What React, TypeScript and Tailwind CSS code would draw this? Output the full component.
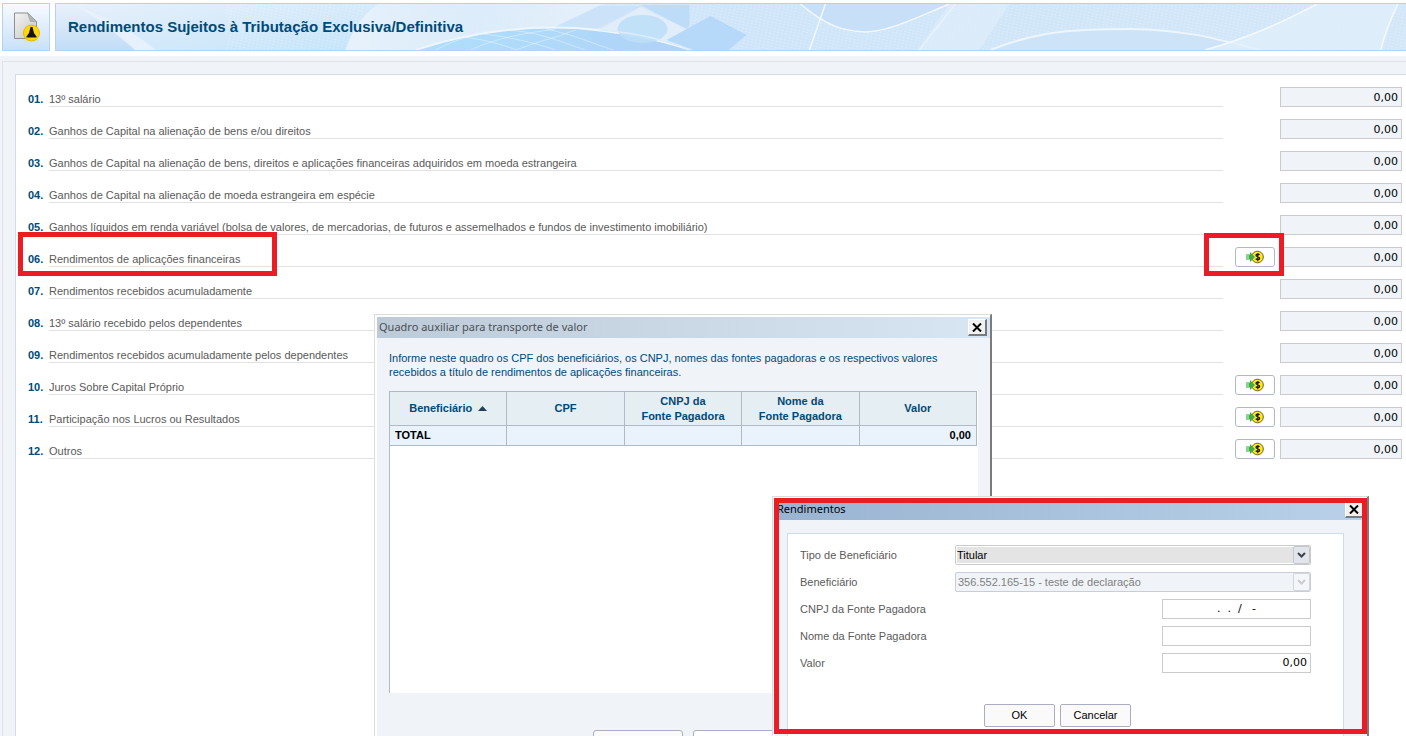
import { useState } from "react";
import type { ReactNode } from "react";

type Row = {
  id: string;
  label: string;
  transfer?: boolean;
  highlight?: boolean;
};

const rows: Row[] = [
  { id: "01", label: "13º salário" },
  { id: "02", label: "Ganhos de Capital na alienação de bens e/ou direitos" },
  {
    id: "03",
    label:
      "Ganhos de Capital na alienação de bens, direitos e aplicações financeiras adquiridos em moeda estrangeira",
  },
  { id: "04", label: "Ganhos de Capital na alienação de moeda estrangeira em espécie" },
  {
    id: "05",
    label:
      "Ganhos líquidos em renda variável (bolsa de valores, de mercadorias, de futuros e assemelhados e fundos de investimento imobiliário)",
  },
  { id: "06", label: "Rendimentos de aplicações financeiras", transfer: true, highlight: true },
  { id: "07", label: "Rendimentos recebidos acumuladamente" },
  { id: "08", label: "13º salário recebido pelos dependentes" },
  { id: "09", label: "Rendimentos recebidos acumuladamente pelos dependentes" },
  { id: "10", label: "Juros Sobre Capital Próprio", transfer: true },
  { id: "11", label: "Participação nos Lucros ou Resultados", transfer: true },
  { id: "12", label: "Outros", transfer: true },
];

function DocumentIcon() {
  return (
    <svg width="28" height="36" viewBox="-1 -2.5 28 36" aria-hidden="true">
      <defs>
        <linearGradient id="paper" x1="0" y1="0" x2="1" y2="1">
          <stop offset="0" stopColor="#f4f4f4" />
          <stop offset="1" stopColor="#c4c5c6" />
        </linearGradient>
        <linearGradient id="shine" x1="0" y1="0" x2="0" y2="1">
          <stop offset="0" stopColor="#d9dda8" />
          <stop offset="1" stopColor="#d5e8f7" stopOpacity="0" />
        </linearGradient>
      </defs>
      <path d="M10 28h16l-2 6H12z" fill="url(#shine)" opacity=".7" />
      <path d="M1.500 1.500h13l9 8.500v17h-22z" fill="url(#paper)" stroke="#8e8f90" />
      <path d="M14.500 1.500l9 8.500h-6z" fill="#b4b5b6" stroke="#9a9b9c" strokeWidth=".6" />
      <circle cx="18.500" cy="21.500" r="8" fill="#ffd60a" stroke="#d8a800" strokeWidth=".7" />
      <path d="M17.500 15.500h2l1.500 6 2.500 3.500v1h-10v-1l2.500-3.500z" fill="#141414" />
    </svg>
  );
}

function BannerArt() {
  return (
    <svg
      className="absolute inset-0 h-full w-full"
      viewBox="0 0 1351 46"
      preserveAspectRatio="none"
      aria-hidden="true"
    >
      <defs>
        <linearGradient id="sky" x1="0" y1="0" x2="1" y2="0">
          <stop offset="0" stopColor="#dfebf8" />
          <stop offset=".2" stopColor="#cfe6f9" />
          <stop offset=".32" stopColor="#d8eafa" />
          <stop offset=".5" stopColor="#cfe5f9" />
          <stop offset="1" stopColor="#d3e7f8" />
        </linearGradient>
        <linearGradient id="left" x1="0" y1="0" x2="0" y2="1">
          <stop offset="0" stopColor="#e9f1fa" />
          <stop offset="1" stopColor="#c2ddf7" />
        </linearGradient>
        <linearGradient id="fold" x1="0" y1="0" x2="1" y2="1">
          <stop offset="0" stopColor="#e6f0fa" />
          <stop offset="1" stopColor="#c4e4fa" />
        </linearGradient>
        <linearGradient id="sweep" x1="0" y1="0" x2="1" y2="0">
          <stop offset="0" stopColor="#eaf3fb" stopOpacity=".9" />
          <stop offset=".5" stopColor="#deedfa" stopOpacity=".6" />
          <stop offset="1" stopColor="#e8f1fa" stopOpacity=".9" />
        </linearGradient>
        <linearGradient id="dome" x1="0" y1="0" x2="1" y2="0">
          <stop offset="0" stopColor="#aedffb" />
          <stop offset="1" stopColor="#b0d2f7" />
        </linearGradient>
        <pattern id="mesh" width="4" height="3" patternUnits="userSpaceOnUse" patternTransform="rotate(12)">
          <path d="M0 .5h2" stroke="#fff" strokeWidth=".7" opacity=".35" />
        </pattern>
      </defs>
      <rect width="1351" height="46" fill="url(#sky)" />
      <path d="M0 0h42c12 14 22 30 37 46H0z" fill="url(#left)" />
      <path d="M30 0h290c-8 18-20 34-32 46H79C68 28 44 12 30 0z" fill="url(#fold)" />
      <path d="M15 0c35 12 60 26 85 46H79C58 28 40 12 15 0z" fill="#eaf3fb" opacity=".8" />
      <rect x="170" width="1181" height="46" fill="url(#mesh)" />
      <path d="M322 0h226l-50 23c-60 1-95 9-140 23h-68c6-20 16-34 32-46z" fill="url(#sweep)" />

      {/* overlapping tiles */}
      <path d="M500 23L543 2h44l-44 22z" fill="#cbe2f8" />
      <path d="M585 1h49v20l-3 4z" fill="#bddcf7" />
      <path d="M545 25l40-22 46 22-32 21h-55z" fill="#e2edfa" />

      {/* woven dome */}
      <path d="M360 46c60-20 115-24 160-22 50 4 85 12 115 22z" fill="url(#dome)" />
      <path
        d="M380 46c20-12 50-18 80-21M415 46c25-12 50-16 85-21M460 46c20-8 40-12 60-20M395 32c30 2 50 8 66 14M420 29c35 4 60 10 80 17M455 26c35 4 50 12 75 20M490 25c30 6 45 14 68 21"
        fill="none"
        stroke="#e0f1fd"
        opacity=".6"
      />
      <path d="M360 46c60-20 115-24 160-22 50 4 85 12 115 22" fill="none" stroke="#eef6fd" strokeWidth="2" />
      <ellipse cx="587" cy="25" rx="25" ry="14" fill="#bddff7" opacity=".9" />
      <path d="M545 26c40 3 66 11 90 20" fill="none" stroke="#dcecfa" strokeWidth="1.500" />
      <path d="M611 36l44-24 36 19-18 15h-35z" fill="#b7d9f9" />

      {/* sails on the right half */}
      <path d="M745 0c28 22 45 27 65 28 25-1 50-14 84-28z" fill="#c8e0f7" />
      <path d="M745 0c28 24 45 27 65 28 25-1 50-14 84-28" fill="none" stroke="#f2f8fe" strokeWidth="1.500" />
      <path d="M770 0l-16 46M900 0l-36 46" fill="none" stroke="#f2f8fe" strokeWidth="1.500" />
      <path d="M894 0h60l-30 46h-62z" fill="#e1eefa" opacity=".6" />
      <path d="M935 46c50-20 90-21 140-21 60 1 90 11 130 21z" fill="#cde3f7" />
      <path d="M935 46c50-20 90-21 140-21 60 1 90 11 130 21" fill="none" stroke="#edf5fd" strokeWidth="2" />
      <path d="M1150 46c50-14 85-32 112-46h81l-17 46z" fill="#e1effb" opacity=".75" />
      <path d="M1150 46c50-14 85-32 112-46M1343 0c-8 16-14 30-17 46" fill="none" stroke="#f4f9fe" strokeWidth="1.500" />
    </svg>
  );
}

function CoinIcon() {
  return (
    <svg width="18" height="14" viewBox="0 0 18 14" aria-hidden="true">
      <circle cx="11.500" cy="7" r="5.800" fill="#ffe81f" stroke="#6e6410" strokeWidth="1" />
      <path d="M0 4.500h4V2l5 5-5 5V9.500H0z" fill="#3fae49" />
      <path d="M0 4.500h3v5H0z" fill="#8fcf95" />
      <path
        d="M13.500 5c-.5-1-3.500-1.300-3.500.3 0 1.700 3.700 1.200 3.700 3 0 1.700-3.300 1.500-3.900.3M11.800 3v8.200"
        fill="none"
        stroke="#1d1a05"
        strokeWidth="1.300"
      />
    </svg>
  );
}

function CloseButton() {
  return (
    <button
      type="button"
      aria-label="Fechar"
      className="flex h-[17px] w-[19px] items-center justify-center border-t border-r-2 border-b-2 border-l border-t-white border-r-[#7a7a7a] border-b-[#7a7a7a] border-l-white bg-[#f0f0f0]"
    >
      <svg width="10" height="9" viewBox="0 0 10 9" aria-hidden="true">
        <path d="M1 .5l8 8M9 .5l-8 8" stroke="#000" strokeWidth="2" />
      </svg>
    </button>
  );
}

function PushButton({ children }: { children: ReactNode }) {
  return (
    <button
      type="button"
      className="h-[23px] w-[71px] rounded-[2px] border border-[#abaec0] bg-[#fafafb] text-center text-black"
    >
      {children}
    </button>
  );
}

function IncomeRow({ row }: { row: Row }) {
  return (
    <div className="flex h-5">
      <label htmlFor={`valor-${row.id}`} className="relative flex min-w-0 flex-1">
        <span className="w-[21px] pt-1 leading-4 font-bold text-[#004a78]">{row.id}.</span>
        <span className="flex-1 border-b border-[#e2e2e2] pt-1 leading-4 whitespace-nowrap">{row.label}</span>
        {row.highlight && (
          <span className="absolute -top-[15px] -left-[10px] z-10 h-11 w-[259px] border-5 border-[#ed1c24]" />
        )}
      </label>
      <div className="relative ml-3 w-10">
        {row.transfer && (
          <button
            type="button"
            aria-label={`Transportar valor: ${row.label}`}
            className="flex h-5 w-10 items-center justify-center rounded-[3px] border border-[#b3b6c8] bg-white"
          >
            <CoinIcon />
          </button>
        )}
        {row.highlight && (
          <span className="absolute -top-[14px] -left-[31px] z-10 h-[43px] w-20 border-5 border-[#ed1c24]" />
        )}
      </div>
      <input
        id={`valor-${row.id}`}
        readOnly
        value="0,00"
        className="ml-[5px] h-5 w-[122px] border border-[#cbcbcb] bg-[#f0f4f9] px-[3px] text-right font-['DejaVu_Sans',sans-serif] text-[11px] text-black"
      />
    </div>
  );
}

function AuxiliaryDialog() {
  const head = "border border-[#b1b9c6] p-0 text-center align-middle font-bold leading-[15px]";
  const cell = "border border-[#b1b9c6] px-[5px] py-0 font-bold text-black";

  return (
    <section
      role="dialog"
      aria-labelledby="quadro-titulo"
      className="absolute top-[314px] left-[374px] h-[480px] w-[618px] border-t border-r-2 border-l border-t-[#dcdcdc] border-r-[#7c7c7c] border-l-[#dcdcdc] bg-[#f0f3f8]"
    >
      <div className="flex h-full flex-col border-t-2 border-l-2 border-white">
        <header className="flex h-[21px] items-center justify-between bg-linear-to-r from-[#bdcbd9] to-[#d8e5f2] pr-[3px] pl-[2px]">
          <h2 id="quadro-titulo" className="font-['Noto_Sans',sans-serif] text-[11px] text-[#4a4f55]">
            Quadro auxiliar para transporte de valor
          </h2>
          <CloseButton />
        </header>
        <div className="pt-[13px] pr-3 pl-3 text-[#004a78]">
          <p className="h-10 leading-[14px]">
            Informe neste quadro os CPF dos beneficiários, os CNPJ, nomes das fontes pagadoras e os respectivos valores
            recebidos a título de rendimentos de aplicações financeiras.
          </p>
          <div className="h-[302px] border-l border-[#b1b9c6] bg-white">
            <table className="-ml-px w-[588px] table-fixed border-collapse text-[11px]">
              <thead className="bg-[#e4eef3]">
                <tr className="h-[34px]">
                  <th className={head}>
                    <span className="inline-flex items-center gap-[6px]">
                      Beneficiário
                      <svg width="9" height="5" viewBox="0 0 9 5" aria-hidden="true">
                        <path d="M0 5l4.500-5L9 5z" fill="#1f3e58" />
                      </svg>
                    </span>
                  </th>
                  <th className={head}>CPF</th>
                  <th className={head}>
                    CNPJ da
                    <br />
                    Fonte Pagadora
                  </th>
                  <th className={head}>
                    Nome da
                    <br />
                    Fonte Pagadora
                  </th>
                  <th className={head}>Valor</th>
                </tr>
              </thead>
              <tbody className="bg-[#eaf2fc]">
                <tr className="h-5">
                  <td className={cell}>TOTAL</td>
                  <td className={cell} />
                  <td className={cell} />
                  <td className={cell} />
                  <td className={`${cell} text-right`}>0,00</td>
                </tr>
              </tbody>
            </table>
          </div>
        </div>
        <footer className="flex justify-center gap-[10px] pt-[37px] pl-2">
          <button
            type="button"
            aria-label="Novo"
            className="h-6 w-[90px] rounded-[3px] border border-[#abaec0] bg-[#fafafb]"
          />
          <button type="button" aria-label="Excluir" className="h-6 w-[90px] rounded-[3px] border border-[#abaec0] bg-white" />
        </footer>
      </div>
    </section>
  );
}

function Arrow({ muted }: { muted?: boolean }) {
  return (
    <span
      className={`pointer-events-none absolute inset-y-0 right-0 flex w-[17px] items-center justify-center rounded-[2px] border ${
        muted ? "border-[#d3d7dc] bg-[#f4f6f9]" : "border-[#c5c7cf] bg-[#e3e5ec]"
      }`}
    >
      <svg width="9" height="6" viewBox="0 0 9 6" aria-hidden="true">
        <path d="M1 1l3.500 3.500L8 1" fill="none" stroke={muted ? "#c9ccd0" : "#3d434d"} strokeWidth="2" />
      </svg>
    </span>
  );
}

function IncomeDialog() {
  const [tipo, setTipo] = useState("Titular");
  const [cnpj, setCnpj] = useState(".  .  /   -");
  const [nome, setNome] = useState("");
  const [valor, setValor] = useState("0,00");
  const field = "h-5 w-[149px] border border-[#cbcbcb] bg-white px-[3px] text-black";

  return (
    <section
      role="dialog"
      aria-labelledby="rendimentos-titulo"
      className="absolute top-[496px] left-[772px] h-[260px] w-[597px] border-t border-r-2 border-l border-t-[#dcdcdc] border-r-[#7c7c7c] border-l-[#dcdcdc] bg-[#f0f3f8]"
    >
      <div className="flex h-full flex-col border-t-2 border-l-2 border-white">
        <header className="flex h-[21px] items-center justify-between bg-linear-to-r from-[#99b4d1] to-[#b9d1ea] pr-[3px] pl-[2px]">
          <h2 id="rendimentos-titulo" className="font-['Noto_Sans',sans-serif] text-[11px] text-black">
            Rendimentos
          </h2>
          <CloseButton />
        </header>
        <form
          className="mt-[13px] mr-[23px] ml-3 flex flex-1 flex-col border border-[#d0dde8] bg-white pt-[11px] pr-8 pl-3"
          onSubmit={(e) => e.preventDefault()}
        >
          <div className="flex flex-col gap-[7px] leading-5">
            <div className="flex">
              <label htmlFor="tipo" className="w-[155px]">
                Tipo de Beneficiário
              </label>
              <div className="relative h-5 flex-1 rounded-[2px] border border-[#cbcbcb] bg-white p-[1px]">
                <select
                  id="tipo"
                  value={tipo}
                  onChange={(e) => setTipo(e.target.value)}
                  className="block h-4 w-full appearance-none bg-[#e4e4e4] leading-4 text-black"
                >
                  <option>Titular</option>
                  <option>Dependente</option>
                </select>
                <Arrow />
              </div>
            </div>
            <div className="flex">
              <label htmlFor="beneficiario" className="w-[155px]">
                Beneficiário
              </label>
              <div className="relative h-5 flex-1 rounded-[2px] border border-[#c9ced6] bg-[#f0f4f9] p-[1px]">
                <select
                  id="beneficiario"
                  disabled
                  className="block h-4 w-full appearance-none bg-transparent pl-[1px] leading-4 text-[#808080] opacity-100"
                >
                  <option>356.552.165-15 - teste de declaração</option>
                </select>
                <Arrow muted />
              </div>
            </div>
            <div className="flex justify-between">
              <label htmlFor="cnpj">CNPJ da Fonte Pagadora</label>
              <input
                id="cnpj"
                value={cnpj}
                onChange={(e) => setCnpj(e.target.value)}
                className={`${field} text-center font-['DejaVu_Sans',sans-serif]`}
              />
            </div>
            <div className="flex justify-between">
              <label htmlFor="nome">Nome da Fonte Pagadora</label>
              <input id="nome" value={nome} onChange={(e) => setNome(e.target.value)} className={field} />
            </div>
            <div className="flex justify-between">
              <label htmlFor="valor">Valor</label>
              <input
                id="valor"
                value={valor}
                onChange={(e) => setValor(e.target.value)}
                className={`${field} text-right font-['DejaVu_Sans',sans-serif]`}
              />
            </div>
          </div>
          <div className="mt-[31px] ml-1 flex justify-center gap-[5px]">
            <PushButton>OK</PushButton>
            <PushButton>Cancelar</PushButton>
          </div>
        </form>
      </div>
      <span className="pointer-events-none absolute top-[1px] left-[1px] h-[236px] w-[593px] border-5 border-[#ed1c24]" />
    </section>
  );
}

export default function App() {
  return (
    <div className="relative flex h-screen flex-col overflow-hidden bg-white font-['Liberation_Sans',Arial,sans-serif] text-[11px] text-[#5a5a5a]">
      <header className="flex gap-[5px] pt-[3px] pb-[5px] pl-[2px]">
        <div className="flex h-12 w-12 items-center justify-center border border-[#b3d3f3] bg-linear-to-b from-[#f7fafe] to-[#c8e1f9]">
          <DocumentIcon />
        </div>
        <div className="relative flex h-12 flex-1 items-center overflow-hidden border-y border-l border-[#b3d3f3]">
          <BannerArt />
          <h1 className="relative pl-3 text-[15px] font-bold text-[#004a78]">
            Rendimentos Sujeitos à Tributação Exclusiva/Definitiva
          </h1>
        </div>
      </header>

      <div className="flex flex-1 flex-col bg-[#f0f3f8] pt-[5px] pl-[2px]">
        <div className="flex flex-1 flex-col border-t border-l border-[#e0e3e6] pt-3 pl-3">
          <main className="flex flex-1 flex-col gap-3 border-t border-l border-[#d0dde8] bg-white pt-3 pr-1 pl-3">
            {rows.map((row) => (
              <IncomeRow key={row.id} row={row} />
            ))}
          </main>
        </div>
      </div>

      <AuxiliaryDialog />
      <IncomeDialog />
    </div>
  );
}
